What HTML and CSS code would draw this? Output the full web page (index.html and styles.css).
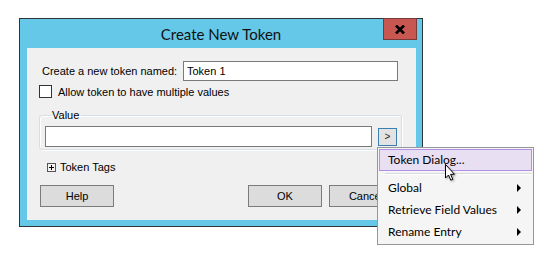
FILE: index.html
```html
<!DOCTYPE html>
<html>
<head>
<meta charset="utf-8">
<link rel="stylesheet" href="styles.css">
</head>
<body>
<div class="stage">
  <div class="window">
    <div class="titlebar">
      <span></span>
      <span class="title">Create New Token</span>
      <button class="close" aria-label="Close">
        <svg width="10" height="9" viewBox="0 0 10 9"><path d="M1 0.5 L9 8.5 M9 0.5 L1 8.5" stroke="#000" stroke-width="2.6" fill="none"/></svg>
      </button>
    </div>
    <div class="client">
      <div class="name-row">
        <span class="name-label">Create a new token named:</span>
        <div class="textbox name-box">Token 1</div>
      </div>
      <div class="check-row">
        <span class="checkbox"></span>
        <span>Allow token to have multiple values</span>
      </div>
      <fieldset class="group">
        <legend>Value</legend>
        <div class="value-row">
          <div class="textbox value-box"></div>
          <button class="more">&gt;</button>
        </div>
      </fieldset>
      <div class="tags-row">
        <span class="plus"></span>
        <span>Token Tags</span>
      </div>
      <div class="buttons">
        <button class="btn">Help</button>
        <span class="spacer"></span>
        <button class="btn">OK</button>
        <button class="btn">Cancel</button>
      </div>
    </div>
  </div>
</div>

<div class="menu">
  <div class="item active">Token Dialog...</div>
  <div class="sep"></div>
  <div class="item sub">Global<span class="arrow"></span></div>
  <div class="item sub">Retrieve Field Values<span class="arrow"></span></div>
  <div class="item sub">Rename Entry<span class="arrow"></span></div>
</div>

<svg class="cursor" width="12" height="19" viewBox="0 0 12 19">
  <path d="M1.5 1.5 L1.5 15 L4.5 12 L6.8 17.2 L8.8 16.3 L6.6 11.3 L10.5 11.3 Z" fill="#fff" stroke="#000" stroke-width="1" stroke-linejoin="miter"/>
</svg>
</body>
</html>
```
FILE: styles.css
```css
html, body {
  margin: 0;
  padding: 0;
  background: #ffffff;
}
body {
  font-family: "Lato", "Liberation Sans", sans-serif;
  font-size: 12px;
  color: #000;
  position: relative;
  width: 540px;
  height: 260px;
  overflow: hidden;
  white-space: nowrap;
}
.stage {
  padding: 18px 0 0 19px;
}
.window {
  width: 404px;
  height: 209px;
  box-sizing: border-box;
  border: 1px solid #2e3438;
  background: #65c8e8;
  display: flex;
  flex-direction: column;
}
.titlebar {
  height: 29px;
  flex: none;
  display: grid;
  grid-template-columns: 1fr auto 1fr;
  align-items: center;
}
.title {
  font-size: 15px;
  color: #111;
  padding-top: 1px;
}
.close {
  justify-self: end;
  align-self: start;
  margin: -1px 5px 0 0;
  width: 34px;
  height: 22px;
  padding: 0;
  box-sizing: border-box;
  border: 1px solid #7a3838;
  background: #c75750;
  display: flex;
  align-items: center;
  justify-content: center;
}
.close svg { display: block; }
.client {
  margin: 0 6px 6px 7px;
  height: 172px;
  flex: none;
  background: #f0f0f0;
  box-sizing: border-box;
  padding: 13px 13px 0 12px;
  display: flex;
  flex-direction: column;
  font-family: "Liberation Sans", Arial, sans-serif;
  font-size: 11px;
}
.name-row {
  display: flex;
  align-items: center;
  height: 20px;
  flex: none;
}
.name-label {
  margin-left: 3px;
  width: 141px;
  flex: none;
}
.textbox {
  box-sizing: border-box;
  height: 20px;
  border: 1px solid #7a7a7a;
  background: #fff;
  padding: 0 3px;
  line-height: 18px;
  flex: none;
}
.name-box {
  width: 215px;
}
.check-row {
  margin-top: 4px;
  display: flex;
  align-items: center;
  height: 13px;
  gap: 6px;
  flex: none;
}
.checkbox {
  width: 13px;
  height: 13px;
  box-sizing: border-box;
  border: 1px solid #333;
  background: #fff;
  flex: none;
}
.group {
  margin: 10px 0 0 0;
  width: 363px;
  box-sizing: border-box;
  border: 1px solid #d5dfe5;
  border-radius: 3px;
  box-shadow: inset 1px 1px 0 #fff, 1px 1px 0 #fff;
  padding: 4px 4px 2px 5px;
  min-width: 0;
  flex: none;
}
.group legend {
  padding: 0 2px 0 1px;
  margin-left: 6px;
  line-height: 14px;
}
.value-row {
  display: flex;
  align-items: center;
  gap: 6px;
}
.value-box {
  width: 327px;
  height: 21px;
}
.more {
  width: 19px;
  height: 18px;
  padding: 0;
  box-sizing: border-box;
  border: 1px solid #3c7fb1;
  background: #e3e3e3;
  font-family: inherit;
  font-size: 10px;
  line-height: 14px;
  color: #222;
  flex: none;
}
.tags-row {
  margin-top: 10px;
  margin-left: 8px;
  display: flex;
  align-items: center;
  gap: 4px;
  height: 14px;
  flex: none;
}
.plus {
  width: 9px;
  height: 9px;
  box-sizing: border-box;
  border: 1px solid #555;
  background:
    linear-gradient(#000, #000) center / 5px 1px no-repeat,
    linear-gradient(#000, #000) center / 1px 5px no-repeat,
    #f4f4f4;
}
.buttons {
  margin-top: 11px;
  display: flex;
  gap: 7px;
  margin-left: 1px;
  flex: none;
}
.spacer { flex: 1; }
.btn {
  width: 74px;
  height: 22px;
  box-sizing: border-box;
  border: 1px solid #7b7b7b;
  background: #dcdcdc;
  font-family: inherit;
  font-size: 11px;
  color: #000;
  padding: 0;
  flex: none;
}
.menu {
  position: absolute;
  left: 377px;
  top: 147px;
  width: 157px;
  box-sizing: border-box;
  border: 1px solid #979797;
  background: #f5f5f5;
  padding: 1px;
}
.item {
  height: 22px;
  box-sizing: border-box;
  padding-left: 9px;
  line-height: 22px;
  display: flex;
  align-items: center;
  justify-content: space-between;
  padding-right: 11px;
}
.item.active {
  background: #e8dff3;
  border: 1px solid #b48fe6;
  padding-left: 8px;
  line-height: 20px;
}
.sep {
  height: 6px;
  margin-left: 6px;
  background:
    linear-gradient(#d7d7d7, #d7d7d7) 0 2px / 100% 1px no-repeat,
    linear-gradient(#fff, #fff) 0 3px / 100% 1px no-repeat;
}
.arrow {
  width: 0;
  height: 0;
  border-left: 4px solid #000;
  border-top: 4px solid transparent;
  border-bottom: 4px solid transparent;
}
.cursor {
  position: absolute;
  left: 444px;
  top: 163px;
  filter: drop-shadow(1px 1px 1px rgba(0,0,0,0.35));
}
```
